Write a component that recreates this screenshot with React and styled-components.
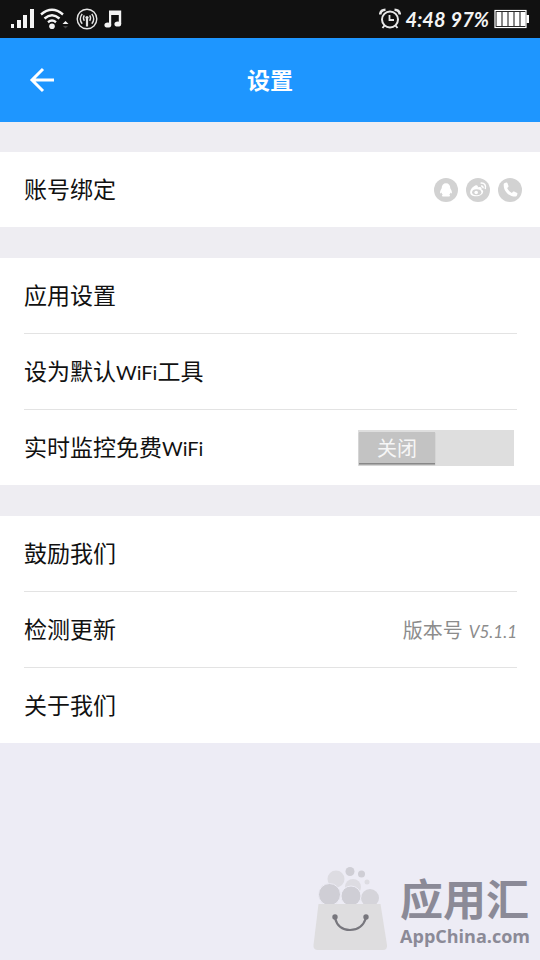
import React, { useState } from 'react';
import styled, { createGlobalStyle } from 'styled-components'

const GlobalStyle = createGlobalStyle`
  * {
    box-sizing: border-box;
  }
  body {
    margin: 0;
    background-color: #edecf5;
    color: #111;
    font-family: Lato, "Noto Sans CJK SC", sans-serif;
  }
`;

// status bar
const StatusBar = styled.div`
  display: flex;
  justify-content: space-between;
  align-items: center;
  height: 38px;
  padding: 0 10px;
  background-color: #111;
  color: #f4f4f4;
`;
const StatusGroup = styled.div`
  display: flex;
  align-items: center;
  gap: ${props => props.gap}px;
  font-size: 20px;
  font-style: italic;
  font-weight: bold;
  svg {
    display: block;
  }
`;

// header
const Header = styled.header`
  display: grid;
  grid-template-columns: 84px 1fr 84px;
  align-items: center;
  height: 84px;
  background-color: #1e96ff;
  color: #fff;
`;
const BackButton = styled.button`
  display: flex;
  align-items: center;
  justify-content: center;
  height: 84px;
  padding: 0;
  border: 0;
  background: none;
  color: inherit;
  cursor: pointer;
`;
const Title = styled.h1`
  margin: 0;
  font-size: 23px;
  line-height: 32px;
  text-align: center;
`;

// list
const Page = styled.div`
  display: flex;
  flex-direction: column;
  min-height: 100vh;
`;
const Groups = styled.main`
  display: flex;
  flex-direction: column;
  gap: 31px;
  padding-top: 30px;
  background-color: #eeedf2;
`;
const Group = styled.section`
  background-color: #fff;
`;
const Row = styled.div`
  display: flex;
  align-items: center;
  justify-content: space-between;
  height: 75px;
  margin-left: 24px;
  margin-right: 23px;
  & + & {
    height: 76px;
    border-top: 1px solid #e3e3e3;
  }
`;
const RowButton = styled.button`
  flex: 1;
  align-self: stretch;
  padding: 0 0 4px;
  border: 0;
  background: none;
  color: inherit;
  font-family: inherit;
  font-size: 23px;
  text-align: left;
  cursor: pointer;
`;
const RowLabel = styled.label`
  padding-bottom: 4px;
  font-size: 23px;
`;
const Latin = styled.span`
  font-size: 20px;
`;
const Accounts = styled.div`
  display: flex;
  gap: 8px;
  margin-right: -5px;
`;
const AccountButton = styled.button`
  width: 24px;
  height: 24px;
  padding: 0;
  border: 0;
  border-radius: 50%;
  background-color: #d2d2d2;
  cursor: pointer;
  svg {
    display: block;
  }
`;
const Version = styled.span`
  color: #8c8c8c;
  font-size: 20px;
`;
const VersionNumber = styled.em`
  margin-left: 6px;
  font-size: 17px;
`;

// switch
const SwitchTrack = styled.span`
  position: relative;
  display: flex;
  justify-content: ${props => props.$on ? 'flex-end' : 'flex-start'};
  width: 156px;
  height: 36px;
  margin-right: 3px;
  padding: 2px 1px;
  background-color: #dedede;
`;
const SwitchInput = styled.input`
  position: absolute;
  inset: 0;
  width: 100%;
  height: 100%;
  margin: 0;
  opacity: 0;
  cursor: pointer;
`;
const SwitchThumb = styled.span`
  width: 76px;
  height: 32px;
  border-bottom: 1px solid #888;
  box-shadow: 0 1px 1px #aaa;
  background-color: #c3c3c3;
  color: #f6f6f6;
  font-size: 20px;
  line-height: 32px;
  text-align: center;
`;

// store badge
const Store = styled.footer`
  display: flex;
  justify-content: flex-end;
  align-items: flex-end;
  gap: 12px;
  margin-top: auto;
  padding: 0 10px 10px 0;
  svg {
    display: block;
  }
`;
const StoreText = styled.div`
  padding-bottom: 2px;
  color: #8b8a97;
  font-weight: bold;
`;
const StoreName = styled.div`
  font-size: 43px;
  line-height: 48px;
`;
const StoreSite = styled.div`
  font-family: "Open Sans", sans-serif;
  font-size: 18px;
  line-height: 24px;
`;

// icons
const SignalIcon = () => (
  <svg width="24" height="20" viewBox="0 0 24 20" fill="#f4f4f4">
    <rect x="1" y="15" width="3" height="4" />
    <rect x="7" y="11" width="4" height="8" />
    <rect x="13" y="6" width="4" height="13" />
    <rect x="20" y="0" width="4" height="19" />
  </svg>
);
const WifiIcon = () => (
  <svg width="30" height="22" viewBox="0 0 30 22" fill="none" stroke="#f4f4f4" strokeWidth="2.4">
    <path d="M1 6.5Q12 -3 23 6.5" />
    <path d="M4.5 10.5Q12 4 19.5 10.5" />
    <path d="M8 14.2Q12 11 16 14.2" />
    <circle cx="12" cy="18.3" r="2.8" fill="#f4f4f4" stroke="none" />
    <path d="M22.5 16L25.5 13L28.5 16Z" fill="#f4f4f4" stroke="none" />
    <path d="M23 18H28L25.5 20.5Z" fill="#444" stroke="none" />
  </svg>
);
const HotspotIcon = () => (
  <svg width="22" height="22" viewBox="0 0 22 22" fill="none" stroke="#e4e4e4" strokeWidth="1.4">
    <circle cx="11" cy="11" r="9.8" />
    <path d="M6.2 15.8Q2.4 11 6.2 5.8M15.8 15.8Q19.6 11 15.8 5.8" />
    <path d="M8.3 12.8Q6.6 10 8.3 7.4M13.7 12.8Q15.4 10 13.7 7.4" />
    <circle cx="11" cy="9.6" r="1.6" fill="#e4e4e4" stroke="none" />
    <path d="M11 11V18.5" strokeWidth="2.2" />
  </svg>
);
const MusicIcon = () => (
  <svg width="18" height="18" viewBox="0 0 18 18" fill="#f4f4f4">
    <path d="M5 0.5H17.2V14H14.8V5H7.2V15.5H5Z" />
    <ellipse cx="3.8" cy="15" rx="3.4" ry="2.6" />
    <ellipse cx="13.8" cy="14" rx="3.4" ry="2.6" />
  </svg>
);
const AlarmIcon = () => (
  <svg width="22" height="22" viewBox="0 0 22 22" fill="none" stroke="#e8e8e8" strokeWidth="2">
    <circle cx="11" cy="11.5" r="8" />
    <path d="M10.5 7V12H15" strokeWidth="1.8" />
    <path d="M1.2 6.5Q1.5 2 6.5 1.8M20.8 6.5Q20.5 2 15.5 1.8" strokeWidth="2.6" />
    <path d="M5.5 17.5L3.5 20M16.5 17.5L18.5 20" />
  </svg>
);
const BatteryIcon = () => (
  <svg width="36" height="20" viewBox="0 0 36 20" fill="#fff">
    <rect x="1" y="1.5" width="31" height="17" fill="none" stroke="#fff" strokeWidth="1.2" />
    {[3, 9, 15, 21, 27].map(x => (
      <rect key={x} x={x - 0.5} y="3" width="5" height="14" />
    ))}
    <rect x="32.5" y="6" width="2.5" height="8" />
  </svg>
);
const ArrowIcon = () => (
  <svg width="26" height="26" viewBox="0 0 26 26" fill="none" stroke="#fff" strokeWidth="3">
    <path d="M25 13H3M14 2L3 13L14 24" />
  </svg>
);
const QQIcon = () => (
  <svg width="24" height="24" viewBox="0 0 24 24" fill="#fff">
    <path d="M12 5.2C14.8 5.2 16.3 7.2 16.3 10.2C17.3 12 18.3 13.6 17.8 15.4C17.4 15.6 16.9 15.1 16.5 14.6C16.3 15.6 15.9 16.2 15.3 16.8C16.3 17.3 16.4 18.6 15 18.6H9C7.6 18.6 7.7 17.3 8.7 16.8C8.1 16.2 7.7 15.6 7.5 14.6C7.1 15.1 6.6 15.6 6.2 15.4C5.7 13.6 6.7 12 7.7 10.2C7.7 7.2 9.2 5.2 12 5.2Z" />
  </svg>
);
const WeiboIcon = () => (
  <svg width="24" height="24" viewBox="0 0 24 24" fill="none" stroke="#fff" strokeWidth="1.5">
    <path d="M9.2 7.6C11.2 6.7 12.3 7.9 11.8 9.5C14.4 8.5 16.2 9.4 15.4 11.4C18 12.3 17.6 15 15.3 16.7C12.4 18.7 8 18.8 5.6 17.2C2.4 15 5 9.6 9.2 7.6Z" fill="#fff" stroke="none" />
    <ellipse cx="10.7" cy="14.2" rx="4.6" ry="3" fill="#d2d2d2" stroke="none" />
    <circle cx="10.2" cy="14.5" r="1.8" fill="#fff" stroke="none" />
    <path d="M14.6 5.2C18.2 4.6 20.6 7.4 19.2 11M15 8C16.6 7.8 17.4 9 16.9 10.3" />
  </svg>
);
const PhoneIcon = () => (
  <svg width="24" height="24" viewBox="0 0 24 24" fill="#fff">
    <path d="M6.8 5L8.4 4.6C9.1 4.5 9.4 4.8 9.6 5.4L10.5 7.9C10.6 8.5 10.5 8.8 10.1 9.2L9.1 10.1C10 12.2 11.8 14 13.9 14.9L14.9 13.8C15.3 13.4 15.6 13.4 16.1 13.6L18.7 14.7C19.3 14.9 19.5 15.3 19.4 15.9L18.9 17.6C18.7 18.3 18.2 18.6 17.6 18.6C10.7 18.5 5.5 13.3 5.7 6.3C5.7 5.7 6.1 5.2 6.8 5Z" />
  </svg>
);
const BagIcon = () => (
  <svg width="75" height="84" viewBox="0 0 75 84" fill="#cfced5">
    <circle cx="23" cy="13" r="8.5" fill="#dddce2" />
    <circle cx="37" cy="5.5" r="4.5" />
    <circle cx="48.5" cy="8" r="3.5" />
    <circle cx="54" cy="16" r="2.5" fill="#dddce2" />
    <circle cx="40" cy="21" r="8" fill="#dddce2" />
    <circle cx="57" cy="32" r="9" fill="#d5d4da" />
    <circle cx="16.5" cy="28.5" r="11" stroke="#edecf5" />
    <circle cx="38" cy="30" r="10" stroke="#edecf5" />
    <path d="M5.5 38H67.5L74 79Q74.5 84 70 84H5Q0 84 0.5 79Z" fill="#dedddf" />
    <g fill="none" stroke="#77767d" strokeWidth="2.2">
      <path d="M22 52Q25 64 37 64T53 52" />
      <circle cx="22" cy="51" r="1.6" fill="#77767d" />
      <circle cx="53" cy="51" r="1.6" fill="#77767d" />
    </g>
  </svg>
);

// view
const accounts = [
  { name: 'QQ', Icon: QQIcon },
  { name: '微博', Icon: WeiboIcon },
  { name: '手机', Icon: PhoneIcon }
];

const Switch = ({ id }) => {
  const [on, setOn] = useState(false);
  return (
    <SwitchTrack $on={on}>
      <SwitchThumb>{on ? '开启' : '关闭'}</SwitchThumb>
      <SwitchInput
        id={id}
        type="checkbox"
        role="switch"
        checked={on}
        onChange={e => setOn(e.target.checked)}
      />
    </SwitchTrack>
  )
}

const App = () => {
  return (
    <Page>
      <GlobalStyle />
      <StatusBar>
        <StatusGroup gap={6}>
          <SignalIcon />
          <WifiIcon />
          <HotspotIcon />
          <MusicIcon />
        </StatusGroup>
        <StatusGroup gap={5}>
          <AlarmIcon />
          <span>4:48</span>
          <span>97%</span>
          <BatteryIcon />
        </StatusGroup>
      </StatusBar>
      <Header>
        <BackButton aria-label="返回"><ArrowIcon /></BackButton>
        <Title>设置</Title>
      </Header>
      <Groups>
        <Group>
          <Row>
            <RowButton>账号绑定</RowButton>
            <Accounts>
              {accounts.map(({ name, Icon }) => (
                <AccountButton key={name} aria-label={name}><Icon /></AccountButton>
              ))}
            </Accounts>
          </Row>
        </Group>
        <Group>
          <Row><RowButton>应用设置</RowButton></Row>
          <Row><RowButton>设为默认<Latin>WiFi</Latin>工具</RowButton></Row>
          <Row>
            <RowLabel htmlFor="monitor">实时监控免费<Latin>WiFi</Latin></RowLabel>
            <Switch id="monitor" />
          </Row>
        </Group>
        <Group>
          <Row><RowButton>鼓励我们</RowButton></Row>
          <Row>
            <RowButton>检测更新</RowButton>
            <Version>版本号<VersionNumber>V5.1.1</VersionNumber></Version>
          </Row>
          <Row><RowButton>关于我们</RowButton></Row>
        </Group>
      </Groups>
      <Store>
        <BagIcon />
        <StoreText>
          <StoreName>应用汇</StoreName>
          <StoreSite>AppChina.com</StoreSite>
        </StoreText>
      </Store>
    </Page>
  )
}

export default App
